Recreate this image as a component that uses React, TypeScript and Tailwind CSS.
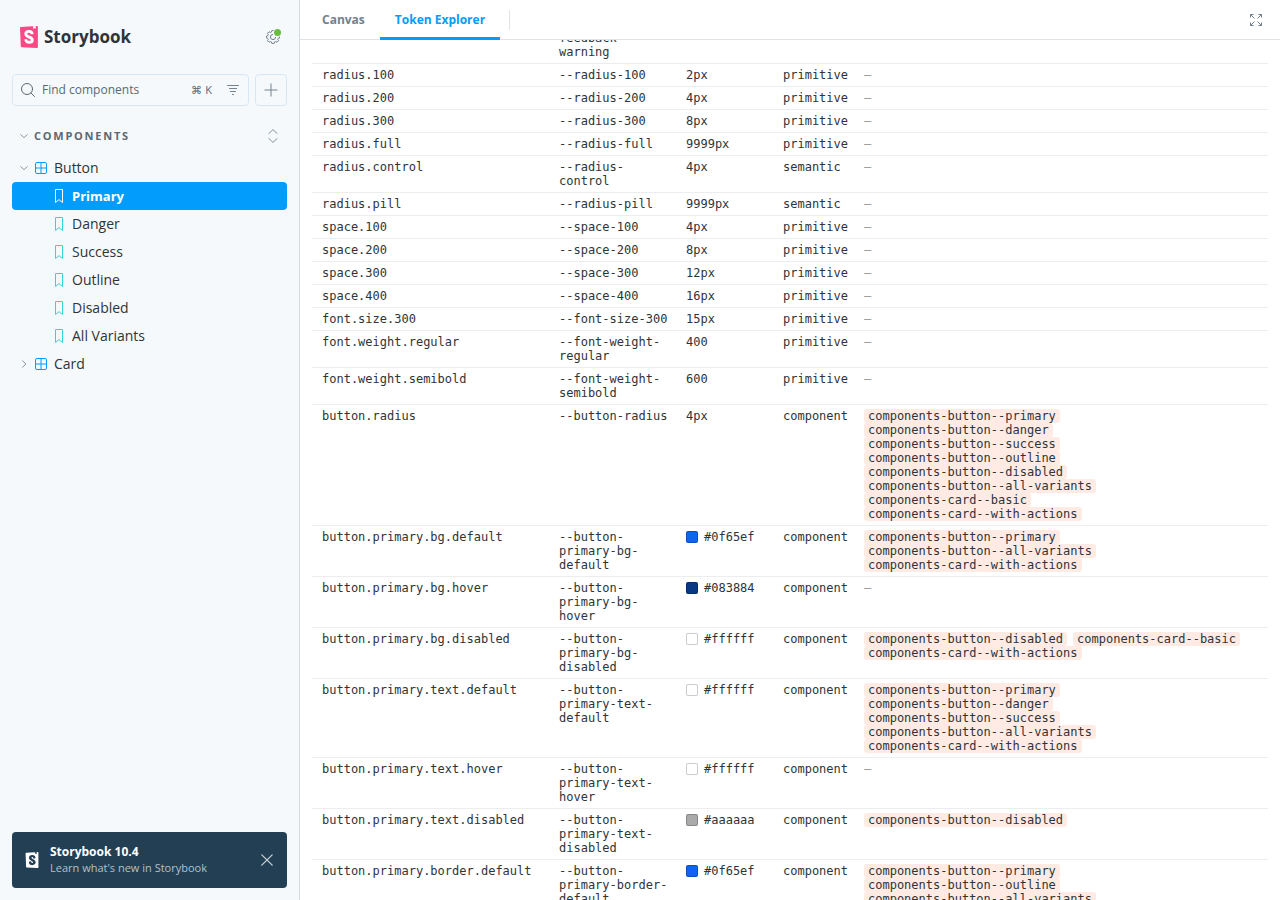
import React from "react";
import { SiStorybook } from "react-icons/si";

type Token = {
  name: string;
  cssVar: string;
  value: string;
  tier: "primitive" | "semantic" | "component";
  stories?: string[];
};

const PRIMARY = "components-button--primary";
const DANGER = "components-button--danger";
const SUCCESS = "components-button--success";
const OUTLINE = "components-button--outline";
const DISABLED = "components-button--disabled";
const ALL_VARIANTS = "components-button--all-variants";
const CARD_BASIC = "components-card--basic";
const CARD_ACTIONS = "components-card--with-actions";

const tokens: Token[] = [
  { name: "radius.100", cssVar: "--radius-100", value: "2px", tier: "primitive" },
  { name: "radius.200", cssVar: "--radius-200", value: "4px", tier: "primitive" },
  { name: "radius.300", cssVar: "--radius-300", value: "8px", tier: "primitive" },
  { name: "radius.full", cssVar: "--radius-full", value: "9999px", tier: "primitive" },
  { name: "radius.control", cssVar: "--radius-control", value: "4px", tier: "semantic" },
  { name: "radius.pill", cssVar: "--radius-pill", value: "9999px", tier: "semantic" },
  { name: "space.100", cssVar: "--space-100", value: "4px", tier: "primitive" },
  { name: "space.200", cssVar: "--space-200", value: "8px", tier: "primitive" },
  { name: "space.300", cssVar: "--space-300", value: "12px", tier: "primitive" },
  { name: "space.400", cssVar: "--space-400", value: "16px", tier: "primitive" },
  { name: "font.size.300", cssVar: "--font-size-300", value: "15px", tier: "primitive" },
  { name: "font.weight.regular", cssVar: "--font-weight-regular", value: "400", tier: "primitive" },
  { name: "font.weight.semibold", cssVar: "--font-weight-semibold", value: "600", tier: "primitive" },
  {
    name: "button.radius",
    cssVar: "--button-radius",
    value: "4px",
    tier: "component",
    stories: [PRIMARY, DANGER, SUCCESS, OUTLINE, DISABLED, ALL_VARIANTS, CARD_BASIC, CARD_ACTIONS],
  },
  {
    name: "button.primary.bg.default",
    cssVar: "--button-primary-bg-default",
    value: "#0f65ef",
    tier: "component",
    stories: [PRIMARY, ALL_VARIANTS, CARD_ACTIONS],
  },
  {
    name: "button.primary.bg.hover",
    cssVar: "--button-primary-bg-hover",
    value: "#083884",
    tier: "component",
  },
  {
    name: "button.primary.bg.disabled",
    cssVar: "--button-primary-bg-disabled",
    value: "#ffffff",
    tier: "component",
    stories: [DISABLED, CARD_BASIC, CARD_ACTIONS],
  },
  {
    name: "button.primary.text.default",
    cssVar: "--button-primary-text-default",
    value: "#ffffff",
    tier: "component",
    stories: [PRIMARY, DANGER, SUCCESS, ALL_VARIANTS, CARD_ACTIONS],
  },
  {
    name: "button.primary.text.hover",
    cssVar: "--button-primary-text-hover",
    value: "#ffffff",
    tier: "component",
  },
  {
    name: "button.primary.text.disabled",
    cssVar: "--button-primary-text-disabled",
    value: "#aaaaaa",
    tier: "component",
    stories: [DISABLED],
  },
  {
    name: "button.primary.border.default",
    cssVar: "--button-primary-border-default",
    value: "#0f65ef",
    tier: "component",
    stories: [PRIMARY, OUTLINE, ALL_VARIANTS],
  },
];

const stories = ["Primary", "Danger", "Success", "Outline", "Disabled", "All Variants"];

const ChevronDown = () => (
  <svg className="w-2 h-2 shrink-0" viewBox="0 0 8 8" fill="none" stroke="#84919a">
    <path d="M.5 2.3 4 5.8l3.5-3.5" />
  </svg>
);

const ChevronRight = () => (
  <svg className="w-2 h-2 shrink-0" viewBox="0 0 8 8" fill="none" stroke="#84919a">
    <path d="M2.3.5 5.8 4 2.3 7.5" />
  </svg>
);

const ComponentIcon = () => (
  <svg className="w-3 h-3 shrink-0" viewBox="0 0 12 12" fill="none" stroke="#029cfd">
    <rect x="0.5" y="0.5" width="11" height="11" rx="1.5" />
    <path d="M6 1v10M1 6h10" />
  </svg>
);

const BookmarkIcon = ({ color }: { color: string }) => (
  <svg className="w-3.5 h-3.5 shrink-0" viewBox="0 0 14 14" fill="none" stroke={color}>
    <path d="M3.5.5h7v13L7 10.6l-3.5 2.9z" strokeLinejoin="round" />
  </svg>
);

const GearIcon = () => (
  <svg className="w-3.5 h-3.5" viewBox="0 0 14 14" fill="none" stroke="#73828c">
    <path
      d="M5.8.6h2.4l.4 1.5 1 .4 1.4-.8 1.5 1.5-.8 1.4.4 1 1.4.4v2l-1.4.4-.4 1 .8 1.4-1.5 1.5-1.4-.8-1 .4-.4 1.5H5.8l-.4-1.5-1-.4-1.4.8-1.5-1.5.8-1.4-.4-1L.5 8V6l1.4-.4.4-1-.8-1.4L3 1.7l1.4.8 1-.4z"
      strokeLinejoin="round"
    />
    <path d="M7 4.4a2.6 2.6 0 1 0 2.6 2.6" />
  </svg>
);

const Logo = () => (
  <svg className="w-[18px] h-[22px]" viewBox="0 0 18 22">
    <path d="M.7 1.1 16.9.1q1-.1 1 .9v20q0 1-1 .9L1.8 21.2q-.9 0-1-.9L0 2.1q0-.9.7-1z" fill="#ff4785" />
    <path d="M13.2.3 15.7.1l.1 2.8-1.2-.9-1.5 1.1z" fill="#fff" />
    <path
      d="M12.2 8.3C12.1 6.3 11 5.4 9.1 5.4 7 5.4 5.8 6.4 5.8 8c0 3.5 6.5 2.9 6.5 5.9 0 1.6-1.2 2.4-3.1 2.4-2.3 0-3.4-1.1-3.4-3"
      fill="none"
      stroke="#fff"
      strokeWidth="2.9"
    />
  </svg>
);

const Sidebar: React.FC = () => {
  return (
    <aside className="flex flex-col w-[300px] shrink-0 px-3 pb-3 bg-[#f6f9fc] border-r border-[#d5dde3]">
      <div className="flex items-center justify-between h-[74px] pl-2 pr-[7px]">
        <a href="#" className="flex items-center gap-1.5 text-[#2e3438]">
          <Logo />
          <span className="text-[17px] leading-6 font-bold">Storybook</span>
        </a>
        <button type="button" aria-label="Settings" className="relative">
          <GearIcon />
          <span className="absolute -top-px -right-px w-[7px] h-[7px] rounded-full bg-[#66bf3c] ring-1 ring-[#f6f9fc]" />
        </button>
      </div>

      <div className="flex gap-1.5">
        <div className="flex flex-1 min-w-0 items-center h-8 px-2 rounded border border-[#d6e8f5]">
          <svg className="w-3.5 h-3.5 shrink-0" viewBox="0 0 14 14" fill="none" stroke="#5c6870">
            <circle cx="6" cy="6" r="5.5" />
            <path d="m10 10 3.5 3.5" strokeLinecap="round" />
          </svg>
          <input
            type="text"
            aria-label="Find components"
            placeholder="Find components"
            className="flex-1 min-w-0 ml-[7px] text-[12px] leading-5 bg-transparent outline-none placeholder:text-[#5c6870]"
          />
          <kbd className="mr-3.5 font-[inherit] text-[11px] leading-4 text-[#5c6870]">⌘ K</kbd>
          <button type="button" aria-label="Filter">
            <svg className="w-3.5 h-3.5" viewBox="0 0 14 14" fill="none" stroke="#73828c" strokeLinecap="round">
              <path d="M1.5 2.5h11M3.5 5.5h7M4.500 8.5h5M6.500 11.5h1" />
            </svg>
          </button>
        </div>
        <button
          type="button"
          aria-label="Create story"
          className="flex items-center justify-center w-8 h-8 rounded border border-[#d6e8f5]"
        >
          <svg className="w-3.5 h-3.5" viewBox="0 0 14 14" fill="none" stroke="#73828c">
            <path d="M7 .5v13M.5 7h13" />
          </svg>
        </button>
      </div>

      <div className="flex items-center justify-between h-7 mt-4 px-2">
        <button
          type="button"
          className="flex items-center gap-1.5 text-[11px] leading-4 font-bold tracking-[0.16em] text-[#5c6870]"
        >
          <ChevronDown />
          COMPONENTS
        </button>
        <button type="button" aria-label="Expand all">
          <svg className="w-3 h-3.5" viewBox="0 0 12 14" fill="none" stroke="#84919a">
            <path d="M1.5 4.8 6 .6l4.5 4.2M1.5 9.2 6 13.4l4.5-4.2" />
          </svg>
        </button>
      </div>

      <nav className="flex-1 mt-1 text-sm leading-5 text-[#2e3438]">
        <button type="button" className="flex items-center gap-[7px] w-full h-7 pl-2">
          <ChevronDown />
          <ComponentIcon />
          Button
        </button>
        {stories.map((story, i) => (
          <a
            key={story}
            href="#"
            className={`flex items-center gap-1.5 h-7 pl-10 rounded ${
              i === 0 ? "bg-[#029cfd] text-white text-[13px] font-bold" : "hover:bg-[#e3f3ff]"
            }`}
          >
            <BookmarkIcon color={i === 0 ? "#ffffff" : "#37d5d3"} />
            <span>{story}</span>
          </a>
        ))}
        <button type="button" className="flex items-center gap-[7px] w-full h-7 pl-2">
          <ChevronRight />
          <ComponentIcon />
          Card
        </button>
      </nav>

      <div className="flex items-center h-14 px-3 rounded bg-[#233f53] text-white">
        <SiStorybook className="w-4 h-4 shrink-0" />
        <a href="#" className="flex-1 ml-2.5">
          <span className="block text-[12px] leading-4 font-bold">Storybook 10.4</span>
          <span className="block text-[11px] leading-4 text-[#b5c0c8]">Learn what's new in Storybook</span>
        </a>
        <button type="button" aria-label="Dismiss" className="p-0.5">
          <svg className="w-3 h-3" viewBox="0 0 12 12" fill="none" stroke="#cdd5da" strokeWidth="1.2" strokeLinecap="round">
            <path d="m.8.8 10.4 10.4M11.2.8.8 11.2" />
          </svg>
        </button>
      </div>
    </aside>
  );
};

const Toolbar: React.FC = () => {
  return (
    <header className="flex items-center justify-between h-10 shrink-0 pl-[7px] pr-[17px] border-b border-[#e0e3e5]">
      <div className="flex items-center h-10 text-[12px] leading-5 font-bold">
        <button type="button" className="h-10 px-[15px] border-y-3 border-transparent text-[#73828c]">
          Canvas
        </button>
        <button
          type="button"
          className="h-10 px-[15px] border-y-3 border-t-transparent border-b-[#029cfd] text-[#029cfd]"
        >
          Token Explorer
        </button>
        <span className="w-px h-5 ml-[9px] bg-[#e0e3e5]" />
      </div>
      <button type="button" aria-label="Go full screen">
        <svg className="w-3.5 h-3.5" viewBox="0 0 14 14" fill="none" stroke="#73828c">
          <path d="M1.5 4.5v-3h3M1.5 1.5l4 4M9.5 1.5h3v3M12.5 1.500l-4 4M1.5 9.5v3h3M1.5 12.5l4-4M9.5 12.5h3v-3M12.5 12.5l-4-4" />
        </svg>
      </button>
    </header>
  );
};

const Row = ({ token }: { token: Token }) => (
  <tr className="border-b border-[#ebedee] align-top">
    <td className="pl-2.5 pr-2 py-1">{token.name}</td>
    <td className="px-2 py-1">{token.cssVar}</td>
    <td className="px-2 py-1">
      <div className="flex items-center gap-1.5">
        {token.value.startsWith("#") && (
          <span
            className="w-3 h-3 rounded-xs border border-black/20"
            style={{ backgroundColor: token.value }}
          />
        )}
        {token.value}
      </div>
    </td>
    <td className="px-2 py-1">{token.tier}</td>
    <td className="pl-2 pr-6 py-1">
      {token.stories ? (
        <div className="flex flex-wrap gap-x-1.5">
          {token.stories.map((id) => (
            <code key={id} className="px-1 rounded-[3px] bg-[#ffebe4] font-[inherit] whitespace-nowrap">
              {id}
            </code>
          ))}
        </div>
      ) : (
        <span className="text-[#999999]">—</span>
      )}
    </td>
  </tr>
);

const TokenTable: React.FC = () => {
  return (
    <div className="flex-1 min-h-0 px-3 overflow-y-auto [scrollbar-width:none]">
      <table className="-mt-[13px] w-full table-fixed border-collapse font-['DejaVu_Sans_Mono',monospace] text-[12px] leading-[14px]">
        <colgroup>
          <col className="w-[239px]" />
          <col className="w-[127px]" />
          <col className="w-[97px]" />
          <col className="w-[81px]" />
          <col />
        </colgroup>
        <tbody>
          <tr className="border-b border-[#ebedee] align-top">
            <td />
            <td className="px-2 py-1">feedback-warning</td>
            <td colSpan={3} />
          </tr>
          {tokens.map((token) => (
            <Row key={token.name} token={token} />
          ))}
        </tbody>
      </table>
    </div>
  );
};

const App: React.FC = () => {
  return (
    <div className="flex h-screen bg-white font-['Open_Sans','Noto_Sans',sans-serif] text-[#2e3438]">
      <Sidebar />
      <main className="flex flex-col flex-1 min-w-0">
        <Toolbar />
        <TokenTable />
      </main>
    </div>
  );
};

export default App;
